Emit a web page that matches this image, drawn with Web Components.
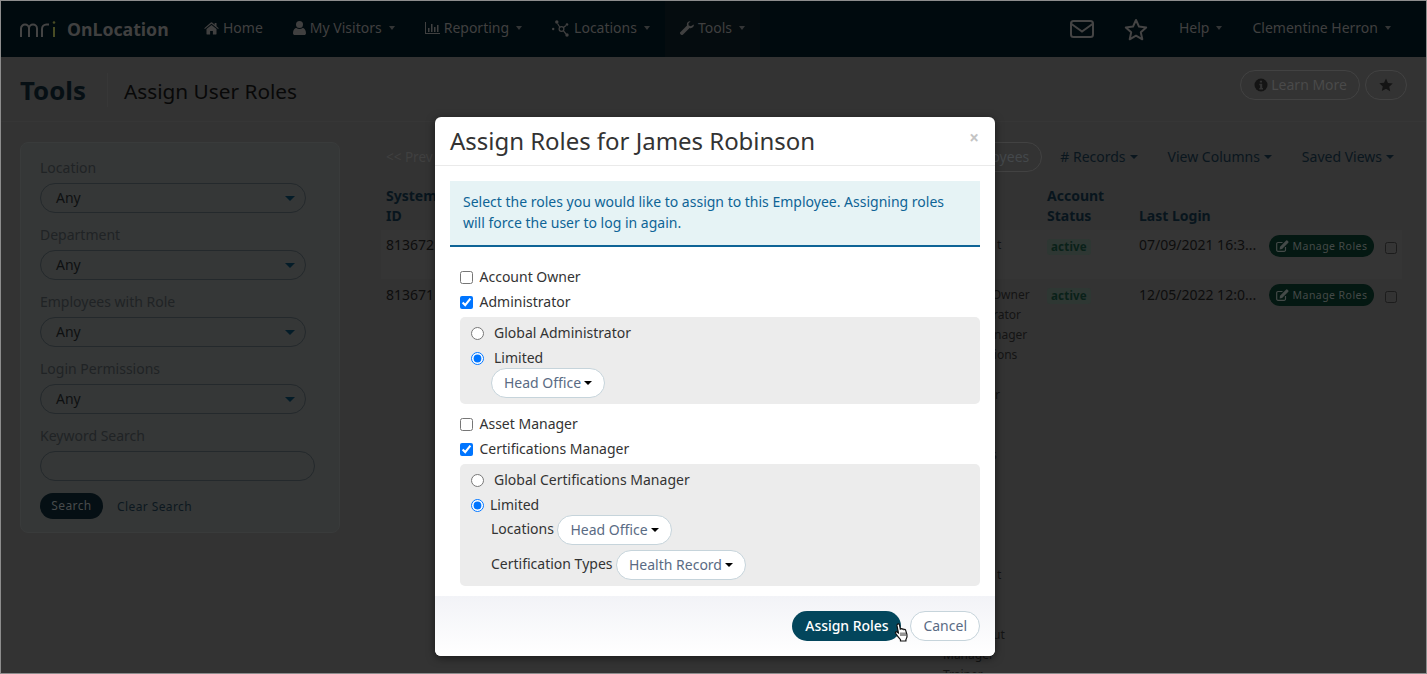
<!DOCTYPE html>
<html lang="en"><head><meta charset="utf-8"><title>Assign User Roles</title>
<style>
html,body{margin:0;height:100%;overflow:hidden;background:#333}
body{font:14px/20px "Noto Sans","Liberation Sans",sans-serif;color:#111}
</style></head><body>
<app-page></app-page>
<script>
const ICONS={
home:'<svg width="15" height="13" viewBox="0 0 16 14" fill="currentColor"><path d="M8 3.2 2.6 7.6V13a.5.5 0 0 0 .5.5h3.4V9.6h3V13.500h3.400a.5.5 0 0 0 .5-.5V7.600z"/><path d="M15.800 6.700 13.400 4.700V1h-2v2L8.700.6a1.100 1.100 0 0 0-1.400 0L.2 6.700l.7.9L8 1.800l7.100 5.800z"/></svg>',
user:'<svg width="13" height="14" viewBox="0 0 13 14" fill="currentColor"><circle cx="6.500" cy="3.500" r="3.500"/><path d="M0 12.200C0 9 1.600 7 3.400 7c.8.600 1.900 1 3.100 1s2.300-.4 3.100-1C11.400 7 13 9 13 12.200c0 1.100-.8 1.800-1.800 1.800H1.800C.8 14 0 13.300 0 12.200z"/></svg>',
chart:'<svg width="15" height="12" viewBox="0 0 15 12" fill="currentColor"><path d="M0 0h1v11h14v1H0z"/><path d="M3 6h1.500v4H3zM6 2h1.500v8H6zM9 5h1.500v5H9zM12 3h1.500v7H12z"/></svg>',
net:'<svg width="18" height="17" viewBox="0 0 18 17" fill="none" stroke="currentColor" stroke-width="1.200"><circle cx="9.500" cy="9" r="2.400"/><path d="M7.700 7 5.500 3.500M11.500 7.500 14 5.500M11.300 10.700 14 14"/><g fill="currentColor" stroke="none"><circle cx="4.800" cy="2" r="1.700"/><circle cx="15" cy="4.500" r="1.300"/><circle cx="15" cy="15" r="1.700"/><circle cx="1.200" cy="9" r="1.200"/></g></svg>',
wrench:'<svg width="14" height="14" viewBox="0 0 14 14" fill="currentColor"><path d="M13.800 3.400c.2.900 0 1.900-.7 2.700-.9 1-2.300 1.300-3.500.9L3.100 13.500a1.600 1.600 0 0 1-2.300 0l-.3-.3a1.600 1.600 0 0 1 0-2.300L7 4.400c-.4-1.200-.1-2.600.9-3.500C8.700.2 9.700 0 10.600.2L8.400 2.400l.3 2.100 2.100.8z"/></svg>',
mail:'<svg width="24" height="18" viewBox="0 0 24 18" fill="none" stroke="currentColor" stroke-width="2"><rect x="1" y="1" width="22" height="16" rx="2.500"/><path d="M1.500 4 12 11.500 22.500 4"/></svg>',
star:'<svg width="24" height="23" viewBox="0 0 24 23" fill="none" stroke="currentColor" stroke-width="2" stroke-linejoin="round"><path d="M12 2l3 6.600 7.200.8-5.400 4.800 1.500 7.100L12 17.700l-6.300 3.600 1.500-7.100L1.800 9.400 9 8.600z"/></svg>',
starf:'<svg width="14" height="14" viewBox="0 0 24 23" fill="currentColor"><path d="M12 .5l3.400 7.400 8.100.9-6 5.500 1.700 8L12 17.900l-7.200 4 1.700-8-6-5.500 8.100-.9z"/></svg>',
info:'<svg width="14" height="14" viewBox="0 0 14 14"><circle cx="7" cy="7" r="6.500" fill="currentColor"/><path d="M5.800 2.700h2.200v1.900H5.800zM5.300 5.800h2.900v4.300h.8v1.400H5.300v-1.400h.8V7.200h-.8z" fill="#333"/></svg>',
edit:'<svg width="13" height="12" viewBox="0 0 13 12" fill="none" stroke="currentColor" stroke-width="1.200"><path d="M9.500 7v3a1.300 1.300 0 0 1-1.300 1.300H2A1.300 1.300 0 0 1 .7 10V3.800A1.300 1.300 0 0 1 2 2.500h4.500"/><path fill="currentColor" stroke="none" d="M4 6.800 10.200.6a.8.8 0 0 1 1.100 0l1 1a.8.8 0 0 1 0 1.100L6.100 8.900 3.600 9.400z"/></svg>'
};
function def(name,css,html){
  customElements.define(name,class extends HTMLElement{
    constructor(){super();const r=this.attachShadow({mode:'open'});
      const h=typeof html==='function'?html(this):html;
      r.innerHTML='<style>'+css+'</style>'+h;}
  });
}
def('nav-item',`
:host{display:flex;align-items:center;height:100%;box-sizing:border-box;padding:0 15px 2px;color:#404040;font-size:14px;white-space:nowrap}
:host([active]){background:#050c0f}
.i{display:flex;margin-right:4px}
.c{width:0;height:0;border:3.500px solid transparent;border-top:4px solid currentColor;border-bottom:0;margin-left:7px;opacity:.8}
`,e=>{const ic=e.getAttribute('icon');return (ic?'<span class="i">'+ICONS[ic]+'</span>':'')+'<slot></slot>'+(e.hasAttribute('caret')?'<span class="c"></span>':'')});

def('top-nav',`
:host{display:flex;align-items:center;height:56px;background:#000a0e;flex:none}
.logo{display:flex;align-items:center;width:170px;padding-left:19px;box-sizing:border-box;color:#404040;font-weight:700;font-size:17.700px;flex:none}
.logo svg{margin-right:9px}
.sp{flex:1}
.ic{color:#444;display:flex}
.m{margin-right:30px}.s{margin-right:16px}
nav{display:flex;height:100%;margin-left:18px;}
.r{display:flex;height:100%;align-items:center;padding-right:20px}
`,`<div class="logo"><svg width="38" height="18" viewBox="0 0 38 18" fill="none" stroke="#444" stroke-width="2"><path d="M1 17V8.500a4 4 0 0 1 4-4 4 4 0 0 1 4 4V17M9 8.500a4 4 0 0 1 4-4 4 4 0 0 1 4 4V17"/><path d="M22 17V9a4.500 4.500 0 0 1 4.500-4.500H29"/><path d="M34 7V17" stroke="#484c24"/><circle cx="34" cy="2.500" r="1.300" fill="#484c24" stroke="none"/></svg><span>OnLocation</span></div>
<nav><slot name="left"></slot></nav><div class="sp"></div>
<div class="r"><span class="ic m">${ICONS.mail}</span><span class="ic s">${ICONS.star}</span><slot name="right"></slot></div>`);

def('outline-pill',`
:host{display:inline-flex;align-items:center;height:30px;box-sizing:border-box;border:1px solid #424242;border-radius:15px;padding:0 12px 0 13px;color:#4a4a4a;white-space:nowrap}
svg{display:block}
span{display:flex;margin-right:3px;color:#141414}
span:empty{display:none}
`,e=>{const ic=e.getAttribute('icon');return '<span>'+(ic?ICONS[ic]:'')+'</span><slot></slot>'});

def('page-head',`
:host{display:flex;align-items:flex-start;flex:none;height:65px;padding:0 19px;box-sizing:border-box;border-bottom:1px solid #363636}
h1{margin:16px 0 0;font-size:25.800px;font-weight:700;color:#060f14;line-height:34px;padding-right:21px;border-right:1px solid #373737}
h2{margin:20px 0 0 16px;font-size:20.800px;font-weight:400;color:#080808;line-height:28px;flex:1}
.a{display:flex;gap:5px;margin-top:13px}
`,`<h1><slot name="title"></slot></h1><h2><slot name="sub"></slot></h2><div class="a"><slot name="actions"></slot></div>`);

def('select-field',`
:host{display:block;margin-bottom:12px}
label{display:block;color:#202325;line-height:20px;margin-bottom:5px}
.b{display:flex;align-items:center;height:30px;box-sizing:border-box;width:266px;border:1px solid #24292c;border-radius:15px;padding:0 10px 0 15px;color:#0e1011;justify-content:space-between}
.c{width:0;height:0;border:5px solid transparent;border-top:5px solid #041c28;border-bottom:0}
.i{width:275px}
`,e=>{const t=e.getAttribute('label');return e.hasAttribute('input')?`<label>${t}</label><div class="b i"></div>`:`<label>${t}</label><div class="b"><span>Any</span><span class="c"></span></div>`});

def('filter-card',`
:host{display:block;width:320px;box-sizing:border-box;height:391px;margin:20px 0 0 19px;padding:15px 19px 0;background:#353737;border:1px solid #393b3b;border-radius:8px;flex:none}
.f{display:flex;align-items:center;margin-top:1px}
.s{display:flex;align-items:center;justify-content:center;width:63px;height:26px;border-radius:13px;background:#050f14;color:#484b4c;font-size:12px;letter-spacing:.4px}
.c{margin-left:14px;color:#0c171f;font-size:12px;letter-spacing:.4px;position:relative;top:1px}
`,`<slot></slot><div class="f"><span class="s">Search</span><span class="c">Clear Search</span></div>`);

def('dark-drop',`
:host{display:inline-flex;align-items:center;color:#0a161e;white-space:nowrap}
i{width:0;height:0;border:4px solid transparent;border-top:4px solid currentColor;border-bottom:0;margin-left:4px}
`,`<slot></slot><i></i>`);

def('status-badge',`
:host{display:inline-block;height:16px;line-height:16px;padding:0 4px;background:#2e3733;color:#0a2119;font-weight:700;font-size:11.500px;border-radius:3px;letter-spacing:.2px}
`,`<slot></slot>`);

def('manage-btn',`
:host{display:inline-flex;align-items:center;height:22px;width:105px;box-sizing:border-box;justify-content:center;background:#041812;color:#444a48;font-size:10.500px;border-radius:11px;letter-spacing:.45px;white-space:nowrap}
span{display:flex;margin-right:4px}
`,`<span>${ICONS.edit}</span><slot></slot>`);

def('dim-check',`
:host{display:block;width:12px;height:12px;border:1px solid #1c1c1c;border-radius:2.500px;box-sizing:border-box}
`,``);

def('user-table',`
:host{display:block;flex:1;margin-left:46px;padding-top:20px;padding-right:32px;min-width:0;position:relative}
.bar{display:flex;align-items:center;height:30px;gap:30px;justify-content:flex-end}
.prev{color:#404040;margin-right:auto;font-size:13.500px}
.grid{display:grid;grid-template-columns:557px 104px 92px 130px 116px 12px;margin-top:14px}
.h{font-weight:700;color:#08151d;align-self:end;padding-bottom:4px}
.row{grid-column:1/-1;display:grid;grid-template-columns:inherit;background:#353535;height:49px;margin:0 -5px;padding:0 5px;align-items:start}
.row2{background:none;height:auto}
.c{padding-top:5px;color:#0d0d0d}
.row2 .c,.row2 .roles{padding-top:6px}
.roles{font-size:12px;line-height:20px;color:#141414;white-space:nowrap;padding-top:5px}
.roles div{height:20px}
.m{padding-top:5px}.b{padding-top:6px}
.row2 .b{padding-top:6px}.row2 .m{padding-top:5px}
.k{padding-top:12px}
`,`<div class="bar"><span class="prev">&lt;&lt; Prev</span><outline-pill style="color:#44484b;margin-right:-12px;padding:0 12px">Employees</outline-pill><dark-drop># Records</dark-drop><dark-drop>View Columns</dark-drop><dark-drop>Saved Views</dark-drop></div>
<div class="grid">
<div class="h">System<br>ID</div><div></div><div class="h">Account<br>Status</div><div class="h">Last Login</div><div></div><div></div>
<div class="row"><div class="c">813672</div><div class="roles"><div style="padding-left:54px">t</div></div><div class="b"><status-badge>active</status-badge></div><div class="c">07/09/2021 16:3...</div><div class="m"><manage-btn>Manage Roles</manage-btn></div><div class="k"><dim-check></dim-check></div></div>
<div class="row row2"><div class="c">813671</div><div class="roles"><div>Account Owner</div><div>Administrator</div><div>Asset Manager</div><div>Certifications</div><div></div><div style="padding-left:52px">r</div><div></div><div></div><div style="padding-left:48px">s</div><div></div><div></div><div></div><div></div><div></div><div style="padding-left:54px">t</div><div></div><div></div><div style="padding-left:50px">ut</div><div>Manager</div><div>Trainer</div></div><div class="b"><status-badge>active</status-badge></div><div class="c">12/05/2022 12:0...</div><div class="m"><manage-btn>Manage Roles</manage-btn></div><div class="k"><dim-check></dim-check></div></div>
</div>`);

def('role-check',`
:host{display:flex;align-items:center;height:25px;color:#333;white-space:nowrap}
input{margin:0 6.500px 0 0;width:13px;height:13px;flex:none}
:host([radio]) input{margin-right:10px}
span{padding-bottom:2px}
`,e=>`<input type="${e.hasAttribute('radio')?'radio':'checkbox'}" name="${e.getAttribute('group')||''}" ${e.hasAttribute('checked')?'checked':''}><span><slot></slot></span>`);

def('role-panel',`
:host{display:block;background:#ececec;border-radius:5px;padding:4px 11px 6px;margin:2px 0 8px}
`,`<slot></slot>`);

def('drop-pill',`
:host{display:inline-flex;align-items:center;height:30px;box-sizing:border-box;background:#fff;border:1px solid #c6d4db;border-radius:15px;padding:0 12px;color:#5a6b84;white-space:nowrap}
i{width:0;height:0;border:4px solid transparent;border-top:4px solid #000;border-bottom:0;margin-left:3px}
`,`<slot></slot><i></i>`);

def('pill-row',`
:host{display:flex;align-items:center;height:30px;color:#333;padding-left:20px;gap:3.500px;white-space:nowrap}
:host([top]){margin-top:5px}
span{position:relative;top:-1px}
`,`<span><slot name="label"></slot></span><slot></slot>`);

def('modal-dialog',`
:host{position:absolute;left:434px;top:116px;width:560px;height:539px;background:#fff;border-radius:6px;box-shadow:0 2px 8px rgba(0,0,0,.5);display:flex;flex-direction:column;color:#333;overflow:hidden}
header{display:flex;justify-content:space-between;height:49px;box-sizing:border-box;border-bottom:1px solid #eaeaea;padding:7px 15px 0;flex:none}
h3{margin:0;font-size:24px;font-weight:400;line-height:34px;color:#333;letter-spacing:-.03px}
.x{color:#c4c4c4;font-weight:700;font-size:17px;line-height:28px;margin-right:1px}
main{flex:1;padding:15px 15px 0}
.al{background:#e6f3f5;border-bottom:2px solid #0e6496;color:#0e6496;height:66px;box-sizing:border-box;padding:11px 13px;line-height:20.600px;margin-bottom:18px}
.form{padding-left:10px}
footer{height:60px;box-sizing:border-box;flex:none;background:linear-gradient(#f2f3f7,#fff);display:flex;justify-content:flex-end;align-items:center;gap:9px;padding:0 15px}
.p{display:flex;align-items:center;height:30px;padding:0 13px 0 13px;border-radius:15px;background:#03465c;color:#fff;font-weight:500;letter-spacing:-.05px}
.q{display:flex;align-items:center;height:30px;box-sizing:border-box;padding:0 12px;border-radius:15px;background:#fff;border:1px solid #c6d4db;color:#5a6b84}
`,`<header><h3><slot name="title"></slot></h3><span class="x">×</span></header>
<main><div class="al"><slot name="alert"></slot></div><div class="form"><slot></slot></div></main>
<footer><span class="p">Assign Roles</span><span class="q">Cancel</span></footer>`);

def('hand-cursor',`
:host{position:absolute;left:893px;top:622px;display:block;width:15px;height:19px}
`,`<svg width="15" height="19" viewBox="0 0 15 19"><path d="M3.500 1.200c.7-.6 1.800-.3 2 .6l.8 4.200c.6-.6 1.500-.5 1.900.2.600-.4 1.400-.3 1.800.4.600-.3 1.300-.1 1.600.5l1.300 4.300c.5 1.900 0 3.700-1 5.300v1.300H6.500v-1.300C5.300 15.300 3.200 12.800 1.600 10.200c-.5-.9.500-1.900 1.400-1.300l1.400 1L3 2.700c-.1-.6.100-1.100.5-1.500z" fill="#fff" stroke="#111" stroke-width="1.200"/><path d="M7 9.500V13M9 9.500V13M11 9.500V13" stroke="#111" stroke-width=".9"/></svg>`);

def('app-page',`
:host{display:block;box-sizing:border-box;width:1427px;height:674px;border:1px solid #8d8d8d;background:#333;position:relative;overflow:hidden}
.body{display:flex;flex:1;min-height:0}
.page{display:flex;flex-direction:column;height:100%}
`,`<div class="page">
<top-nav>
<nav-item slot="left" icon="home">Home</nav-item>
<nav-item slot="left" icon="user" caret>My Visitors</nav-item>
<nav-item slot="left" icon="chart" caret>Reporting</nav-item>
<nav-item slot="left" icon="net" caret>Locations</nav-item>
<nav-item slot="left" icon="wrench" caret active>Tools</nav-item>
<nav-item slot="right" caret>Help</nav-item>
<nav-item slot="right" caret>Clementine Herron</nav-item>
</top-nav>
<page-head><span slot="title">Tools</span><span slot="sub">Assign User Roles</span>
<outline-pill slot="actions" icon="info">Learn More</outline-pill><outline-pill slot="actions" icon="starf" style="padding:0 7px 0 13px;width:42px"></outline-pill></page-head>
<div class="body"><filter-card>
<select-field label="Location"></select-field>
<select-field label="Department"></select-field>
<select-field label="Employees with Role"></select-field>
<select-field label="Login Permissions"></select-field>
<select-field label="Keyword Search" input></select-field>
</filter-card><user-table></user-table></div>
</div>
<modal-dialog>
<span slot="title">Assign Roles for James Robinson</span>
<span slot="alert">Select the roles you would like to assign to this Employee. Assigning roles will force the user to log in again.</span>
<role-check>Account Owner</role-check>
<role-check checked>Administrator</role-check>
<role-panel>
<role-check radio group="a">Global Administrator</role-check>
<role-check radio group="a" checked>Limited</role-check>
<pill-row style="margin-top:-3px;gap:0"><drop-pill>Head Office</drop-pill></pill-row>
</role-panel>
<role-check>Asset Manager</role-check>
<role-check checked>Certifications Manager</role-check>
<role-panel>
<role-check radio group="b">Global Certifications Manager</role-check>
<role-check radio group="b" checked><span style="margin-left:-4px">Limited</span></role-check>
<pill-row style="margin-top:-3px"><span slot="label">Locations</span><drop-pill>Head Office</drop-pill></pill-row>
<pill-row top><span slot="label">Certification Types</span><drop-pill>Health Record</drop-pill></pill-row>
</role-panel>
</modal-dialog>
<hand-cursor></hand-cursor>`);
</script>
</body></html>
